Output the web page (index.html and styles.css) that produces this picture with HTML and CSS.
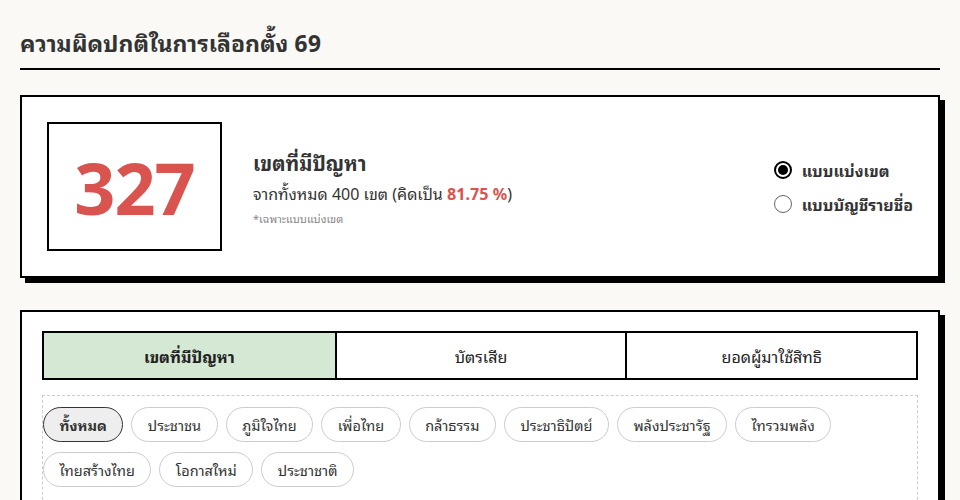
FILE: index.html
```html
<!DOCTYPE html>
<html lang="th">
<head>
<meta charset="utf-8">
<title>ความผิดปกติในการเลือกตั้ง 69</title>
<link rel="stylesheet" href="styles.css">
</head>
<body>
<div class="page">
  <h1 class="title">ความผิดปกติในการเลือกตั้ง 69</h1>
  <div class="rule"></div>

  <section class="card summary">
    <div class="bignum">327</div>
    <div class="info">
      <div class="info-head">เขตที่มีปัญหา</div>
      <div class="info-sub">จากทั้งหมด 400 เขต (คิดเป็น <b class="red">81.75 %</b>)</div>
      <div class="info-note">*เฉพาะแบบแบ่งเขต</div>
    </div>
    <div class="radios">
      <label class="radio"><span class="dot on"></span><span>แบบแบ่งเขต</span></label>
      <label class="radio"><span class="dot"></span><span>แบบบัญชีรายชื่อ</span></label>
    </div>
  </section>

  <section class="card main">
    <div class="tabs">
      <div class="tab active">เขตที่มีปัญหา</div>
      <div class="tab">บัตรเสีย</div>
      <div class="tab">ยอดผู้มาใช้สิทธิ</div>
    </div>
    <div class="filters">
      <span class="pill active">ทั้งหมด</span>
      <span class="pill">ประชาชน</span>
      <span class="pill">ภูมิใจไทย</span>
      <span class="pill">เพื่อไทย</span>
      <span class="pill">กล้าธรรม</span>
      <span class="pill">ประชาธิปัตย์</span>
      <span class="pill">พลังประชารัฐ</span>
      <span class="pill">ไทรวมพลัง</span>
      <span class="pill">ไทยสร้างไทย</span>
      <span class="pill">โอกาสใหม่</span>
      <span class="pill">ประชาชาติ</span>
    </div>
  </section>
</div>
</body>
</html>
```

FILE: styles.css
```css
* { box-sizing: border-box; }
html, body { margin: 0; padding: 0; }
body {
  background: #faf9f5;
  color: #333;
  font-family: "Noto Sans Thai Looped", "Noto Sans", sans-serif;
  width: 960px;
  height: 500px;
  overflow: hidden;
}
.page { padding: 24px 20px 0 20px; }
.title {
  margin: 0;
  font-size: 23px;
  line-height: 36px;
  font-weight: 700;
  color: #333;
}
.rule {
  height: 2px;
  background: #000;
  margin-top: 8px;
}
.card {
  background: #fff;
  border: 2px solid #000;
  box-shadow: 5px 5px 0 #000;
}
.summary {
  margin-top: 25px;
  padding: 25px;
  display: flex;
  align-items: center;
}
.bignum {
  width: 175px;
  height: 129px;
  border: 2px solid #000;
  display: flex;
  align-items: center;
  justify-content: center;
  font-family: "Noto Sans", sans-serif;
  font-size: 72px;
  font-weight: 700;
  color: #d9534f;
  letter-spacing: -1px;
}
.info { margin-left: 31px; flex: 1; }
.info-head { font-size: 20px; font-weight: 700; line-height: 30px; }
.info-sub { font-size: 16px; line-height: 26px; margin-top: 3px; }
.red { color: #d9534f; font-weight: 700; }
.info-note { font-size: 11px; color: #888; line-height: 18px; margin-top: 3px; }
.radios { display: flex; flex-direction: column; gap: 10px; padding-top: 0; }
.radio { display: flex; align-items: center; font-size: 16px; font-weight: 700; line-height: 24px; }
.dot {
  width: 18px; height: 18px;
  border-radius: 50%;
  border: 1px solid #666;
  margin-right: 10px;
  position: relative;
  background: #fff;
}
.dot.on { border: 2px solid #000; }
.dot.on::after {
  content: "";
  position: absolute;
  left: 2px; top: 2px;
  width: 10px; height: 10px;
  border-radius: 50%;
  background: #000;
}
.main {
  margin-top: 32px;
  padding: 19px 20px 20px 20px;
  height: 240px;
}
.tabs {
  display: grid;
  grid-template-columns: 1fr 1fr 1fr;
  border: 2px solid #000;
  height: 49px;
}
.tab {
  display: flex;
  align-items: center;
  justify-content: center;
  font-size: 16px;
  color: #222;
}
.tab + .tab { border-left: 2px solid #000; }
.tab.active { background: #d5e8d4; font-weight: 700; }
.filters {
  margin-top: 15px;
  border: 1px dashed #ccc;
  padding: 11px 0 10px 0;
  display: flex;
  flex-wrap: wrap;
  gap: 10px 8px;
  min-height: 120px;
  align-content: flex-start;
}
.pill {
  height: 35px;
  padding: 0 15.5px;
  border: 1px solid #ccc;
  border-radius: 18px;
  display: inline-flex;
  align-items: center;
  font-size: 14.5px;
  color: #333;
  background: #fff;
}
.pill.active {
  background: #eee;
  border-color: #333;
  font-weight: 700;
}
```
